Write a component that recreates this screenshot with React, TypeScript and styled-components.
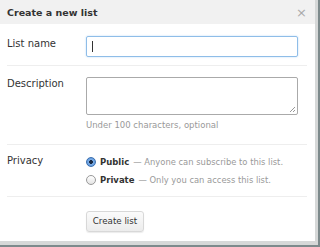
import React from "react";
import styled, { createGlobalStyle } from "styled-components";

const Global = createGlobalStyle`
  html, body { margin: 0; padding: 0; }
  body {
    width: 320px; height: 247px; overflow: hidden;
    background: #7d8a8c;
    font-family: "DejaVu Sans", Verdana, sans-serif;
  }
`;

const Frame = styled.div`
  width: 318px;
  height: 245px;
  background: #d6d8d8;
`;

const Dialog = styled.div`
  width: 315px;
  height: 241px;
  background: #fff;
  display: flex;
  flex-direction: column;
`;

const Header = styled.div`
  height: 24px;
  background: #f1f1f1;
  display: flex;
  align-items: center;
  justify-content: space-between;
  padding: 0 8px 0 7px;
`;

const Title = styled.h3`
  margin: 0;
  font-size: 9.5px;
  font-weight: bold;
  color: #333;
`;

const Close = styled.span`
  font-size: 13px;
  color: #aaa;
  line-height: 1;
`;

const Body = styled.div`
  padding: 0 8px 0 7px;
  display: flex;
  flex-direction: column;
`;

const Row = styled.div<{ $pt: number; $h: number; $border?: boolean }>`
  display: grid;
  grid-template-columns: 79px 1fr;
  align-items: start;
  padding-top: ${(p) => p.$pt}px;
  height: ${(p) => p.$h}px;
  box-sizing: border-box;
  border-bottom: ${(p) => (p.$border ? "1px solid #eee" : "none")};
`;

const Label = styled.label<{ $mt: number }>`
  font-size: 10px;
  color: #333;
  margin-top: ${(p) => p.$mt}px;
`;

const Field = styled.div`
  display: flex;
  flex-direction: column;
`;

const Input = styled.div`
  width: 212px;
  height: 21px;
  box-sizing: border-box;
  border: 1px solid #8fbde8;
  border-radius: 2px;
  box-shadow: 0 0 2px #b7d8f5;
  display: flex;
  align-items: center;
  padding-left: 5px;
`;

const Caret = styled.span`
  width: 1px;
  height: 11px;
  background: #333;
`;

const TextArea = styled.div`
  width: 212px;
  height: 38px;
  box-sizing: border-box;
  border: 1px solid #aaa;
  border-radius: 2px;
  position: relative;
`;

const Grip = styled.svg`
  position: absolute;
  right: 1px;
  bottom: 1px;
`;

const Hint = styled.div`
  font-size: 8.5px;
  color: #999;
  margin-top: 5px;
`;

const Options = styled.div`
  display: flex;
  flex-direction: column;
  gap: 6px;
`;

const Option = styled.div`
  display: flex;
  align-items: center;
  font-size: 8.5px;
  color: #333;
  height: 12px;
`;

const Radio = styled.span<{ $on?: boolean }>`
  width: 10px;
  height: 10px;
  border-radius: 50%;
  box-sizing: border-box;
  margin-right: 4px;
  border: 1px solid ${(p) => (p.$on ? "#3a6fb0" : "#999")};
  background: ${(p) =>
    p.$on
      ? "radial-gradient(circle, #1a2a44 0 1.6px, #7fb0e8 2.2px, #4a86d0 100%)"
      : "linear-gradient(#fff, #e4e4e4)"};
`;

const Strong = styled.b`
  font-weight: bold;
  margin-right: 4px;
`;

const Note = styled.span`
  color: #999;
  font-size: 8.4px;
`;

const Footer = styled.div`
  padding: 12px 0 0 79px;
`;

const Button = styled.button`
  width: 58px;
  height: 21px;
  font-family: inherit;
  font-size: 8.7px;
  color: #333;
  border: 1px solid #d8d8d8;
  border-radius: 3px;
  background: linear-gradient(#fbfbfb, #ececec);
  box-shadow: 0 1px 1px rgba(0, 0, 0, 0.08);
  padding: 0;
`;

export default function App() {
  return (
    <>
      <Global />
      <Frame>
        <Dialog>
          <Header>
            <Title>Create a new list</Title>
            <Close>×</Close>
          </Header>
          <Body>
            <Row $pt={12} $h={42} $border>
              <Label $mt={2}>List name</Label>
              <Input>
                <Caret />
              </Input>
            </Row>
            <Row $pt={11} $h={79} $border>
              <Label $mt={1}>Description</Label>
              <Field>
                <TextArea>
                  <Grip width="7" height="7" viewBox="0 0 7 7">
                    <path d="M6 1 L1 6 M6 4 L4 6" stroke="#999" strokeWidth="1" />
                  </Grip>
                </TextArea>
                <Hint>Under 100 characters, optional</Hint>
              </Field>
            </Row>
            <Row $pt={11} $h={52} $border>
              <Label $mt={-1}>Privacy</Label>
              <Options>
                <Option>
                  <Radio $on />
                  <Strong>Public</Strong>
                  <Note>— Anyone can subscribe to this list.</Note>
                </Option>
                <Option>
                  <Radio />
                  <Strong>Private</Strong>
                  <Note>— Only you can access this list.</Note>
                </Option>
              </Options>
            </Row>
            <Footer>
              <Button>Create list</Button>
            </Footer>
          </Body>
        </Dialog>
      </Frame>
    </>
  );
}
